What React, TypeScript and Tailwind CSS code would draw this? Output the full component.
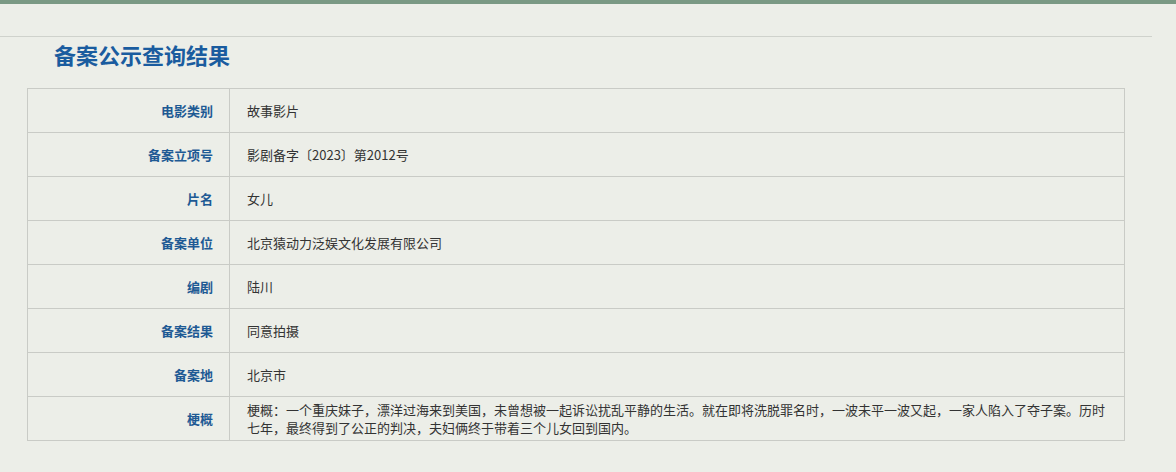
import React from 'react';

const rows: { label: string; value: string }[] = [
  { label: '电影类别', value: '故事影片' },
  { label: '备案立项号', value: '影剧备字〔2023〕第2012号' },
  { label: '片名', value: '女儿' },
  { label: '备案单位', value: '北京猿动力泛娱文化发展有限公司' },
  { label: '编剧', value: '陆川' },
  { label: '备案结果', value: '同意拍摄' },
  { label: '备案地', value: '北京市' },
  {
    label: '梗概',
    value:
      '梗概：一个重庆妹子，漂洋过海来到美国，未曾想被一起诉讼扰乱平静的生活。就在即将洗脱罪名时，一波未平一波又起，一家人陷入了夺子案。历时七年，最终得到了公正的判决，夫妇俩终于带着三个儿女回到国内。',
  },
];

const App = () => {
  return (
    <div
      className="w-[1176px] h-[472px] bg-[#eceee8] overflow-hidden"
      style={{ fontFamily: '"Noto Sans CJK SC", "Liberation Sans", sans-serif' }}
    >
      <div className="h-[4px] bg-[#7a9984]" />
      {/* 제목 영역 */}
      <div className="mt-[32px] w-[1152px] border-t border-[#cfd2cc]" />
      <h2 className="pl-[54px] pt-[2px] h-[51px] text-[22px] leading-[30px] font-bold text-[#1a5c9f]">
        备案公示查询结果
      </h2>
      <table className="ml-[27px] w-[1098px] border-collapse text-[13px]">
        <tbody>
          {rows.map((row) => (
            <tr key={row.label} className="h-[44px]">
              <th className="w-[202px] border border-[#c9cbc6] pr-[16px] text-right font-bold text-[#1e5a94]">
                {row.label}
              </th>
              <td className="border border-[#c9cbc6] pl-[17px] pr-[8px] leading-[18px] text-[#333]">
                {row.value}
              </td>
            </tr>
          ))}
        </tbody>
      </table>
    </div>
  );
};

export default App;
